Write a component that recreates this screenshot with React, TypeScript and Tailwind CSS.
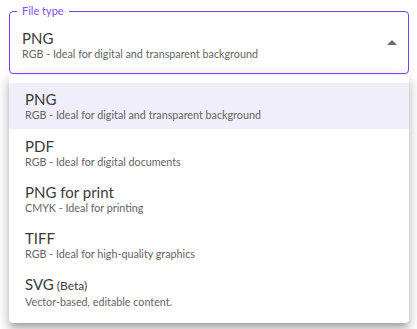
const OPTIONS = [
  { name: "PNG", desc: "RGB - Ideal for digital and transparent background" },
  { name: "PDF", desc: "RGB - Ideal for digital documents" },
  { name: "PNG for print", desc: "CMYK - Ideal for printing" },
  { name: "TIFF", desc: "RGB - Ideal for high-quality graphics" },
  { name: "SVG", beta: true, desc: "Vector-based, editable content." },
];

export default function App() {
  return (
    <div className="h-[329px] w-[417px] bg-white pt-[11px] pl-[9px]" style={{ fontFamily: "Lato, 'Open Sans', sans-serif" }}>
      <div className="relative flex h-[63px] w-[400px] items-start rounded-[4px] border-[1.5px] border-[#7b3ff2] pl-[12px] pr-[4px]">
        <span className="absolute -top-[9px] left-[7px] bg-white px-[5px] text-[11px] leading-[16px] text-[#8450f3]">
          File type
        </span>
        <div className="pt-[17px]">
          <div className="text-[15px] leading-[18px] text-[#3a3a3a]">PNG</div>
          <div className="text-[10.75px] leading-[14px] text-[#646464]">RGB - Ideal for digital and transparent background</div>
        </div>
        <svg className="ml-auto mt-[19px] h-6 w-6" viewBox="0 0 24 24" aria-hidden>
          <path d="M7 14l5-5 5 5z" fill="#6b6b6b" />
        </svg>
      </div>

      <ul className="mt-px w-[400px] rounded-[4px] bg-white py-2 shadow-[0_5px_5px_-3px_rgba(0,0,0,0.2),0_8px_10px_1px_rgba(0,0,0,0.14),0_3px_14px_2px_rgba(0,0,0,0.12)]">
        {OPTIONS.map((o, i) => (
          <li
            key={o.name}
            className={`flex h-[46.4px] flex-col justify-center pl-4 ${i === 0 ? "bg-[#f1eefc]" : ""}`}
          >
            <div className="text-[15px] leading-[18px] text-[#3a3a3a]">
              {o.name}
              {o.beta && <span className="text-[12px]"> (Beta)</span>}
            </div>
            <div className="text-[10.75px] leading-[14px] text-[#646464]">{o.desc}</div>
          </li>
        ))}
      </ul>
    </div>
  );
}
